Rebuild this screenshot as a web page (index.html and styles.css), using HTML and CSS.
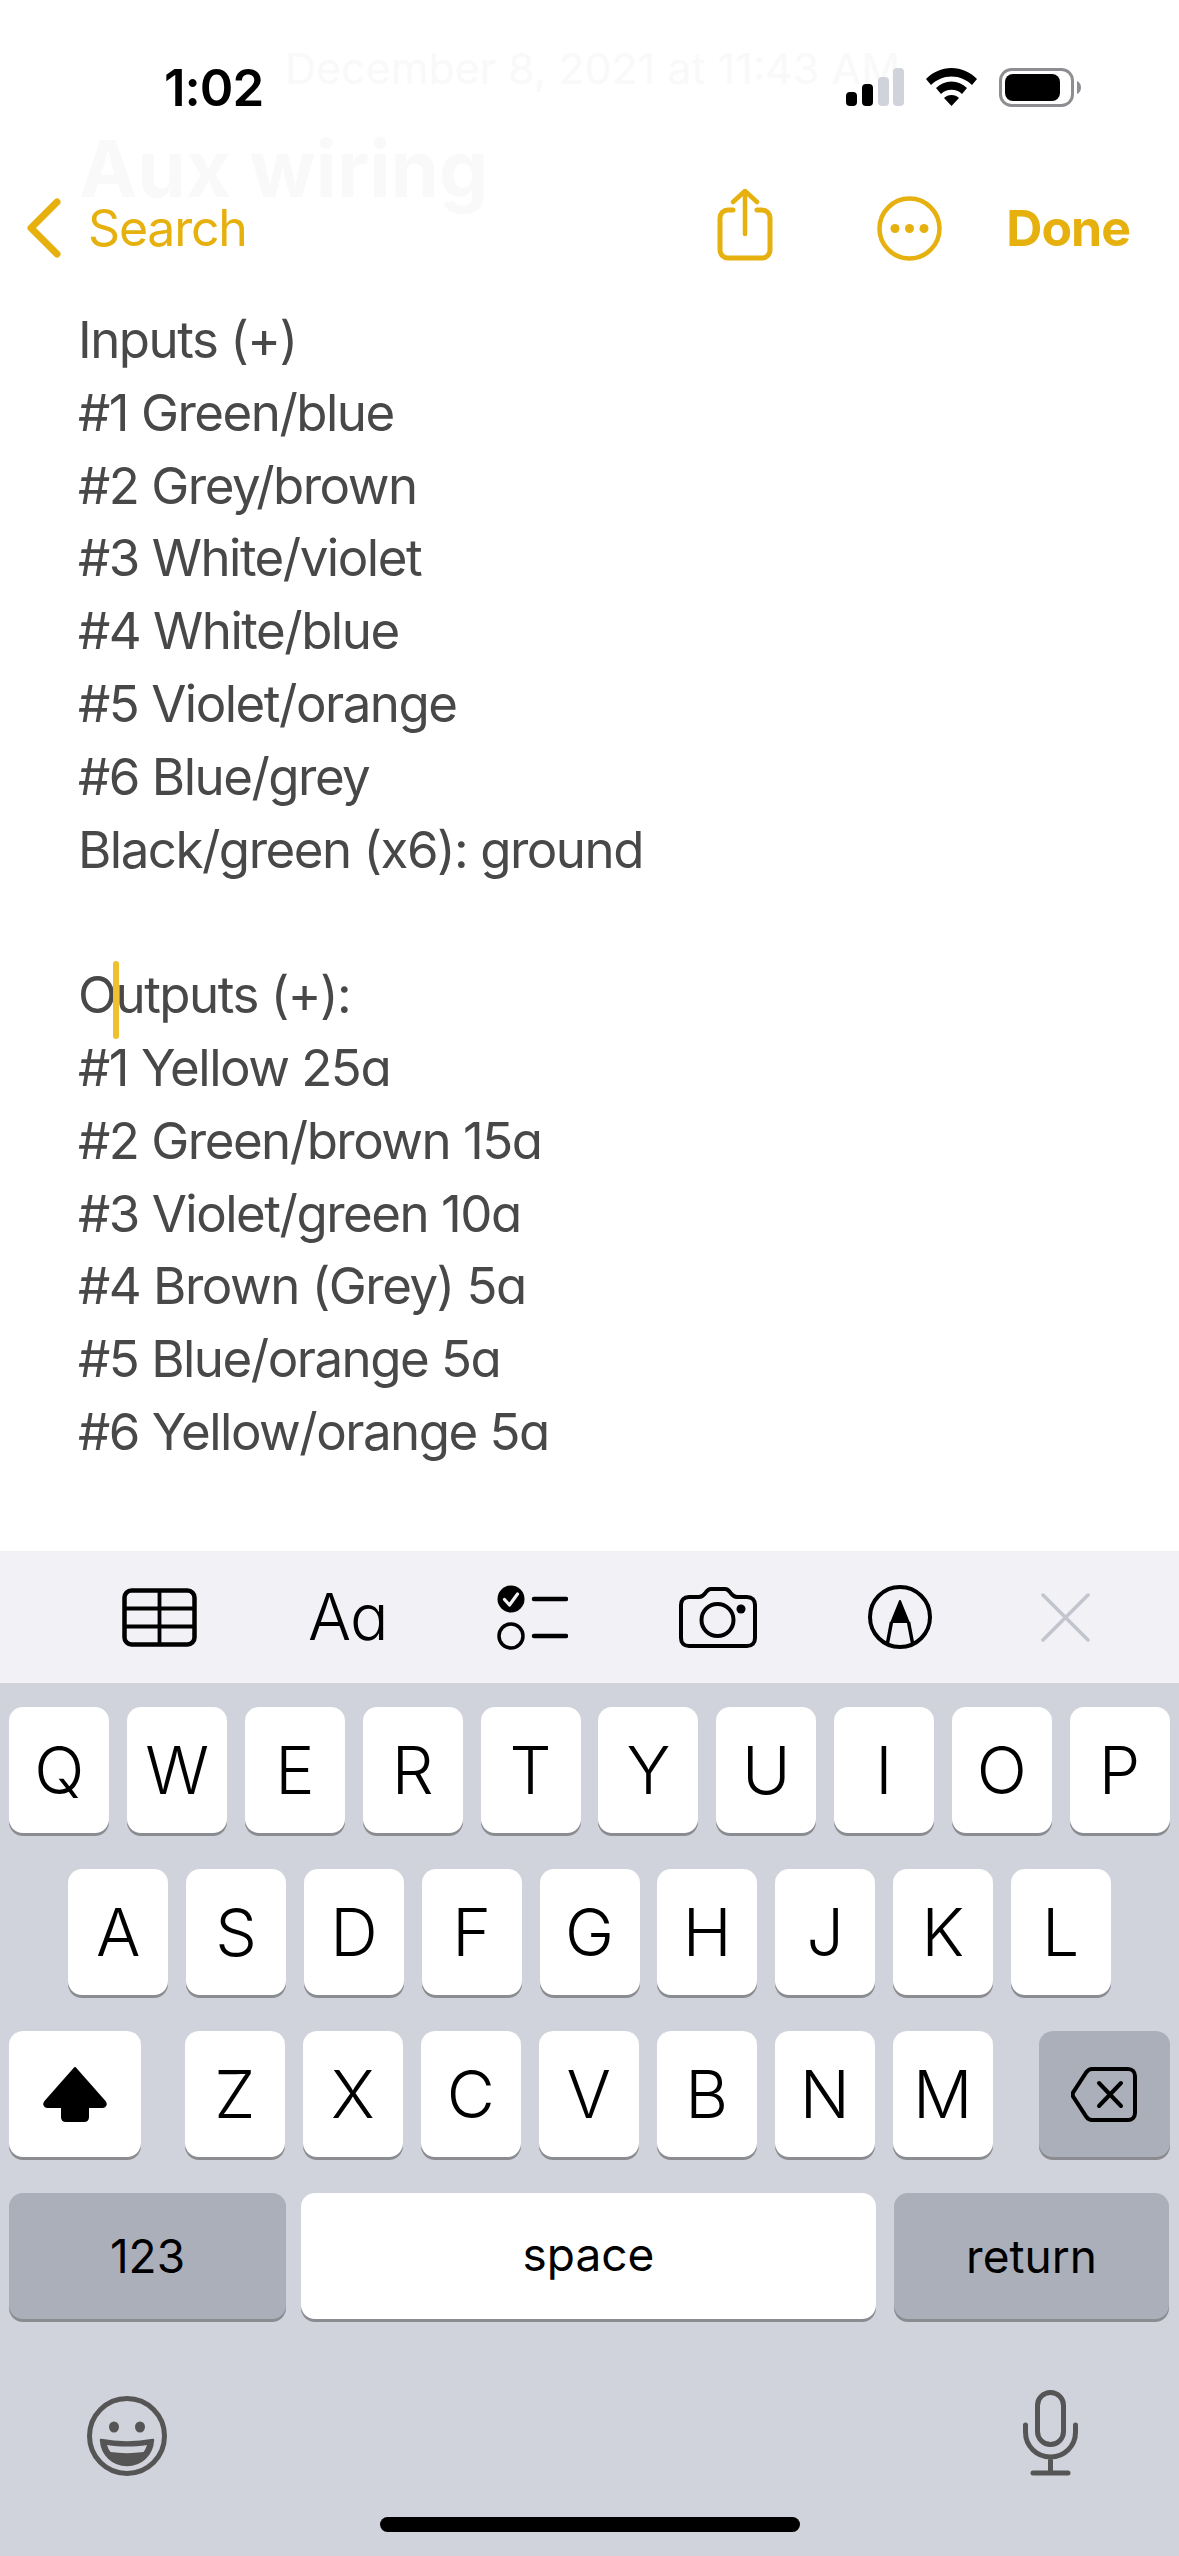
FILE: index.html
```html
<!DOCTYPE html>
<html lang="en">

<head>
  <meta charset="UTF-8">
  <meta name="viewport" content="width=device-width, initial-scale=1.0">
  <title>Aux wiring</title>

  <link rel="stylesheet" href="styles.css">
</head>

<body>
  <div id="app">
    <!-- note header scrolled away under the nav, barely visible -->
    <div class="ghost-date">December 8, 2021 at 11:43 AM</div>
    <div class="ghost-title">Aux wiring</div>

    <div class="status-bar">
      <span class="time">1:02</span>
      <div class="status-icons">
        <svg width="58" height="38" viewBox="0 0 58 38">
          <rect x="0" y="24" width="11" height="14" rx="4" fill="#000" />
          <rect x="16" y="16" width="11" height="22" rx="4" fill="#000" />
          <rect x="32" y="9" width="11" height="29" rx="4" fill="#d0d3db" />
          <rect x="47" y="0" width="11" height="38" rx="4" fill="#d0d3db" />
        </svg>
        <svg width="51" height="38" viewBox="0 0 51 38">
          <path d="M25.5 0C15.5 0 7 4 0 11l5 6c6-5.500 12.500-8.500 20.500-8.500S40 11.500 46 17l5-6C44 4 35.500 0 25.500 0z" fill="#000" />
          <path d="M25.500 13.500c-6 0-11 2.200-15.500 6.500l5 6c3-2.800 6.500-4.200 10.500-4.200S33 23.200 36 26l5-6c-4.500-4.300-9.500-6.500-15.500-6.500z" fill="#000" />
          <path d="M25.500 27c-3 0-5.500 1-7.500 3l7.500 8 7.500-8c-2-2-4.500-3-7.500-3z" fill="#000" />
        </svg>
        <svg width="82" height="39" viewBox="0 0 82 39">
          <rect x="1.500" y="1.500" width="72" height="36" rx="11" fill="#fff" stroke="#8e8e92" stroke-width="3" />
          <rect x="6" y="6" width="55" height="27" rx="8" fill="#000" />
          <path d="M78 13c2.500 1 4 3.500 4 6.500s-1.500 5.500-4 6.500z" fill="#8e8e92" />
        </svg>
      </div>
    </div>

    <div class="nav-bar">
      <svg class="back-icon" width="36" height="60" viewBox="0 0 36 60">
        <path d="M31 4L5 30l26 26" fill="none" stroke="#e6b00e" stroke-width="7" stroke-linecap="round" stroke-linejoin="round" />
      </svg>
      <span class="nav-label">Search</span>
      <div class="nav-actions">
        <svg class="share-icon" width="56" height="73" viewBox="0 0 56 73">
          <path d="M16 22H11a8 8 0 0 0-8 8v32a8 8 0 0 0 8 8h34a8 8 0 0 0 8-8V30a8 8 0 0 0-8-8h-5" fill="none" stroke="#e6b00e" stroke-width="5" stroke-linecap="round" />
          <path d="M28 46V3M16 14L28 3l12 11" fill="none" stroke="#e6b00e" stroke-width="4.500" stroke-linecap="round" stroke-linejoin="round" />
        </svg>
        <svg class="more-icon" width="65" height="65" viewBox="0 0 65 65">
          <circle cx="32.500" cy="32.500" r="30" fill="none" stroke="#e6b00e" stroke-width="4.500" />
          <circle cx="18" cy="32.500" r="4.500" fill="#e6b00e" />
          <circle cx="32.500" cy="32.500" r="4.500" fill="#e6b00e" />
          <circle cx="47" cy="32.500" r="4.500" fill="#e6b00e" />
        </svg>
        <span class="nav-done">Done</span>
      </div>
    </div>

    <div class="note">
      <p>Inputs (+)</p>
      <p>#1 Green/blue</p>
      <p>#2 Grey/brown</p>
      <p>#3 White/violet</p>
      <p>#4 White/blue</p>
      <p>#5 Violet/orange</p>
      <p>#6 Blue/grey</p>
      <p>Black/green (x6): ground</p>
      <p>&nbsp;</p>
      <p>O<span class="caret"></span>utputs (+):</p>
      <p>#1 Yellow 25<span class="alt-a">a</span></p>
      <p>#2 Green/brown 15<span class="alt-a">a</span></p>
      <p>#3 Violet/green 10<span class="alt-a">a</span></p>
      <p>#4 Brown (Grey) 5<span class="alt-a">a</span></p>
      <p>#5 Blue/orange 5<span class="alt-a">a</span></p>
      <p>#6 Yellow/orange 5<span class="alt-a">a</span></p>
    </div>

    <div class="toolbar">
      <svg width="75" height="59" viewBox="0 0 75 59">
        <rect x="2.500" y="2.500" width="70" height="54" rx="7" fill="none" stroke="#000" stroke-width="4.500" />
        <path d="M37.500 3v53M3 20.500h69M3 38.500h69" fill="none" stroke="#000" stroke-width="3.800" />
      </svg>
      <span class="format-label">A<span class="alt-a">a</span></span>
      <svg width="71" height="65" viewBox="0 0 71 65">
        <circle cx="14" cy="14" r="13.500" fill="#000" />
        <path d="M7.500 14.500l5 5.500 8-11" fill="none" stroke="#f1f1f6" stroke-width="3.200" stroke-linecap="round" stroke-linejoin="round" />
        <circle cx="14" cy="51" r="12" fill="none" stroke="#000" stroke-width="3.500" />
        <path d="M37 14h32M37 51h32" fill="none" stroke="#000" stroke-width="4.500" stroke-linecap="round" />
      </svg>
      <svg width="78" height="61" viewBox="0 0 78 61">
        <path d="M10 10h10c3 0 4-1 6-3.500C28 3.500 29.500 2 32 2h14c2.500 0 4 1.500 6 4.500 2 2.500 3 3.500 6 3.500h10c5 0 8 3 8 8v33c0 5-3 8-8 8H10c-5 0-8-3-8-8V18c0-5 3-8 8-8z" fill="none" stroke="#000" stroke-width="4" />
        <circle cx="38.500" cy="33" r="16" fill="none" stroke="#000" stroke-width="4" />
        <circle cx="62" cy="22" r="4.500" fill="#000" />
      </svg>
      <svg width="64" height="64" viewBox="0 0 64 64">
        <circle cx="32" cy="32" r="30" fill="none" stroke="#000" stroke-width="4" />
        <path d="M32 16l-8.500 21h17z" fill="#000" stroke="#000" stroke-width="2" stroke-linejoin="round" />
        <path d="M23.500 37l-4 21M40.500 37l4 21" fill="none" stroke="#000" stroke-width="3.500" />
      </svg>
      <svg class="close-icon" width="49" height="49" viewBox="0 0 49 49">
        <path d="M2 2l45 45M47 2L2 47" fill="none" stroke="#c2c5cd" stroke-width="3.500" stroke-linecap="round" />
      </svg>
    </div>

    <div class="keyboard">
      <div class="key-row">
        <div class="key">Q</div>
        <div class="key">W</div>
        <div class="key">E</div>
        <div class="key">R</div>
        <div class="key">T</div>
        <div class="key">Y</div>
        <div class="key">U</div>
        <div class="key">I</div>
        <div class="key">O</div>
        <div class="key">P</div>
      </div>
      <div class="key-row">
        <div class="key">A</div>
        <div class="key">S</div>
        <div class="key">D</div>
        <div class="key">F</div>
        <div class="key">G</div>
        <div class="key">H</div>
        <div class="key">J</div>
        <div class="key">K</div>
        <div class="key">L</div>
      </div>
      <div class="key-row key-row-shift">
        <div class="key key-shift">
          <svg width="64" height="56" viewBox="0 0 64 56">
            <path d="M32 2L2 36c-1.500 2-.5 5 2 5h15v10c0 2.500 1.500 4 4 4h18c2.500 0 4-1.500 4-4V41h15c2.500 0 3.500-3 2-5z" fill="#000" stroke="#000" stroke-width="2" stroke-linejoin="round" />
          </svg>
        </div>
        <div class="letters">
          <div class="key">Z</div>
          <div class="key">X</div>
          <div class="key">C</div>
          <div class="key">V</div>
          <div class="key">B</div>
          <div class="key">N</div>
          <div class="key">M</div>
        </div>
        <div class="key key-dark key-delete">
          <svg width="66" height="55" viewBox="0 0 66 55">
            <path d="M21 2h36c4 0 7 3 7 7v37c0 4-3 7-7 7H21c-2.500 0-4-1-5.500-3L3 31c-1.500-2-1.500-5 0-7L15.500 5C17 3 18.500 2 21 2z" fill="none" stroke="#000" stroke-width="4" />
            <path d="M28 16l22 23M50 16L28 39" fill="none" stroke="#000" stroke-width="4" stroke-linecap="round" />
          </svg>
        </div>
      </div>
      <div class="key-row key-row-bottom">
        <div class="key key-dark key-numbers">123</div>
        <div class="key key-space">space</div>
        <div class="key key-dark key-return">return</div>
      </div>

      <div class="keyboard-extras">
        <svg width="80" height="80" viewBox="0 0 80 80">
          <circle cx="40" cy="40" r="37.500" fill="none" stroke="#555" stroke-width="5" />
          <ellipse cx="27" cy="31" rx="5" ry="5.500" fill="#555" />
          <ellipse cx="53" cy="31" rx="5" ry="5.500" fill="#555" />
          <path d="M14 44c16 3 36 3 52 0-1 15-12 25-26 25S15 59 14 44z" fill="#555" stroke="#555" stroke-width="2.500" stroke-linejoin="round" />
          <path d="M20 49c13 2 27 2 40 0-1 3-2 5-3.500 7-11 1.500-22 1.500-33 0-1.500-2-2.500-4-3.500-7z" fill="#d0d3db" />
        </svg>
        <svg width="55" height="86" viewBox="0 0 55 86">
          <rect x="14.500" y="2.500" width="26" height="52" rx="13" fill="none" stroke="#555" stroke-width="5" />
          <path d="M2.500 35v7c0 14 11 25 25 25s25-11 25-25v-7M27.500 67v16M10 83h35" fill="none" stroke="#555" stroke-width="5" stroke-linecap="round" />
        </svg>
      </div>
      <div class="home-bar"></div>
    </div>
  </div>
</body>

</html>
```

FILE: styles.css
```css
body {
  margin: 0;
  background-color: #fff;
  font-family: Inter, "Noto Sans", sans-serif;
}

#app {
  display: flex;
  flex-direction: column;
  height: 2556px;
  overflow: hidden;
  position: relative;
  width: 1179px;
}

svg {
  display: block;
  flex-shrink: 0;
}

.ghost-date,
.ghost-title {
  color: #f9f9f9;
  position: absolute;
  white-space: nowrap;
}

.ghost-date {
  font-size: 43px;
  left: 285px;
  top: 42px;
}

.ghost-title {
  font-size: 78px;
  font-weight: 700;
  left: 79px;
  line-height: 70px;
  top: 134px;
}

.status-bar {
  align-items: center;
  display: flex;
  height: 174px;
  justify-content: space-between;
  padding: 0 98px 0 164px;
  position: relative;
}

.time {
  font-size: 51px;
  font-weight: 600;
  letter-spacing: -1px;
}

.status-icons {
  align-items: center;
  display: flex;
  gap: 22px;
}

.nav-bar {
  align-items: center;
  color: #e6b00e;
  display: flex;
  font-size: 50px;
  height: 108px;
  line-height: 50px;
  padding: 0 49px 0 26px;
  position: relative;
}

.back-icon {
  margin-right: 26px;
}

.nav-label {
  letter-spacing: -1.2px;
}

.nav-actions {
  align-items: center;
  display: flex;
  margin-left: auto;
}

.share-icon {
  margin-bottom: 7px;
}

.more-icon {
  margin: 0 64px 0 104px;
}

.nav-done {
  font-weight: 700;
  letter-spacing: -1px;
}

.note {
  color: #484848;
  flex: 1;
  font-size: 51px;
  letter-spacing: -1.5px;
  line-height: 72.8px;
  padding: 22px 0 0 78px;
  position: relative;
}

.note p {
  margin: 0;
}

.alt-a {
  font-feature-settings: "cv11";
}

.caret {
  position: relative;
}

.caret::after {
  background-color: #efc02f;
  border-radius: 3px;
  content: "";
  height: 78px;
  left: -3px;
  position: absolute;
  top: -3px;
  width: 6px;
}

.toolbar {
  align-items: center;
  background-color: #f1f1f6;
  display: flex;
  gap: 111px;
  height: 132px;
  padding-left: 122px;
}

.format-label {
  font-size: 64px;
  font-weight: 300;
  letter-spacing: -1px;
  line-height: 64px;
  margin-right: -2px;
}

.close-icon {
  margin-left: -2px;
}

.keyboard {
  background-color: #d0d3db;
  box-sizing: border-box;
  display: flex;
  flex-direction: column;
  gap: 36px;
  height: 873px;
  padding-top: 24px;
}

.key-row {
  display: flex;
  gap: 17.8px;
  justify-content: center;
}

.key {
  align-items: center;
  background-color: #fff;
  border-radius: 14px;
  box-shadow: 0 3px 0 #8b8c91;
  display: flex;
  font-size: 66px;
  font-weight: 350;
  height: 126px;
  justify-content: center;
  width: 100px;
}

.key-row-shift {
  justify-content: flex-start;
  padding-left: 9px;
}

.letters {
  display: flex;
  gap: 18px;
  margin: 0 28px 0 26px;
}

.key-shift {
  width: 132px;
}

.key-dark {
  background-color: #abafb9;
}

.key-delete {
  width: 131px;
}

.key-row-bottom {
  gap: 15px;
  justify-content: flex-start;
  padding-left: 9px;
}

.key-numbers,
.key-space,
.key-return {
  font-size: 46px;
  font-weight: 400;
}

.key-numbers {
  width: 277px;
}

.key-space {
  padding-bottom: 4px;
  height: 122px;
  width: 575px;
}

.key-return {
  margin-left: 3px;
  width: 275px;
}

.keyboard-extras {
  align-items: flex-end;
  display: flex;
  height: 86px;
  justify-content: space-between;
  margin-top: 35px;
  padding: 0 101px 0 87px;
}

.home-bar {
  align-self: center;
  background-color: #000;
  border-radius: 8px;
  height: 15px;
  margin-top: 5px;
  width: 420px;
}
```
